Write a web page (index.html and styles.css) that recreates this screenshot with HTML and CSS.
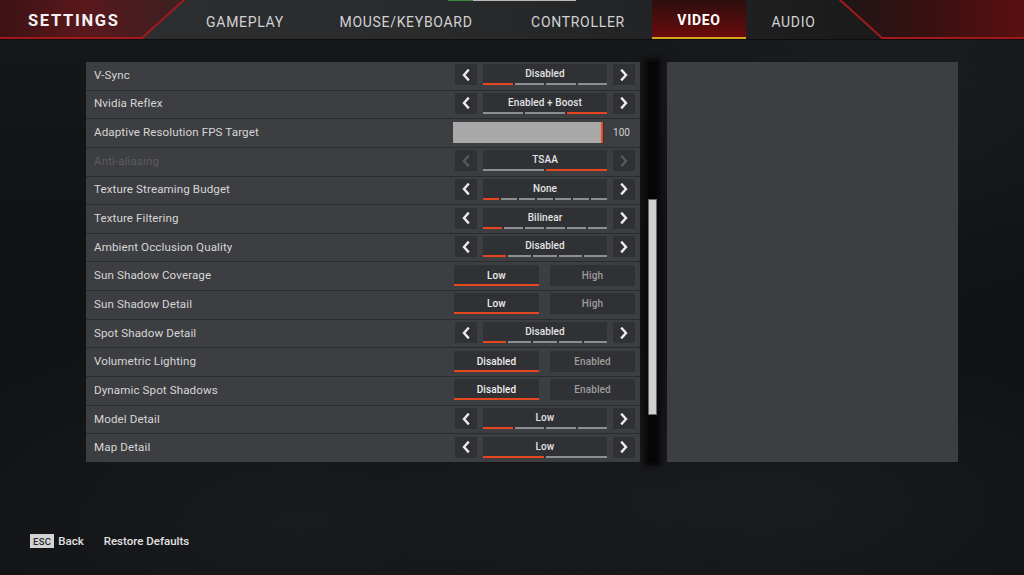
FILE: index.html
```html
<!DOCTYPE html>
<html>
<head>
<meta charset="utf-8">
<link rel="stylesheet" href="styles.css">
</head>
<body>
<div class="screen">
  <header class="topbar">
    <svg class="topbar-deco" width="1024" height="40" viewBox="0 0 1024 40">
      <defs>
        <linearGradient id="gl" x1="0" y1="0" x2="1" y2="0">
          <stop offset="0" stop-color="#3c1214"/>
          <stop offset="0.45" stop-color="#5a181b"/>
          <stop offset="1" stop-color="#3a2123"/>
        </linearGradient>
        <linearGradient id="gr" x1="0" y1="0" x2="1" y2="0">
          <stop offset="0" stop-color="#1d1516"/>
          <stop offset="0.5" stop-color="#3a1011"/>
          <stop offset="1" stop-color="#5a0f10"/>
        </linearGradient>
      </defs>
      <polygon points="0,0 184,0 142,38 0,38" fill="url(#gl)"/>
      <polygon points="840,0 1024,0 1024,38 882,38" fill="url(#gr)"/>
      <polyline points="185,-1 142,38 0,38" fill="none" stroke="#a3191b" stroke-width="2"/>
      <polyline points="839,-1 882,38 1024,38" fill="none" stroke="#a3191b" stroke-width="2"/>
    </svg>
    <div class="topline"><span class="topline-green"></span><span class="topline-gray"></span></div>
    <div class="brand">SETTINGS</div>
    <nav class="tabs">
      <div class="tab tab-gameplay">GAMEPLAY</div>
      <div class="tab tab-mouse">MOUSE/KEYBOARD</div>
      <div class="tab tab-controller">CONTROLLER</div>
      <div class="tab tab-video active">VIDEO</div>
      <div class="tab tab-audio">AUDIO</div>
    </nav>
  </header>

  <main class="content">
    <section class="list">
      <div class="row">
        <div class="label">V-Sync</div>
        <div class="ctl-arrows">
          <div class="arrow"><svg viewBox="0 0 8 12" width="8" height="12"><path d="M6 1.5 L2 6 L6 10.5"/></svg></div>
          <div class="value"><span class="vtext">Disabled</span><div class="segs"><i class="on"></i><i></i><i></i><i></i></div></div>
          <div class="arrow"><svg viewBox="0 0 8 12" width="8" height="12"><path d="M2 1.5 L6 6 L2 10.5"/></svg></div>
        </div>
      </div>
      <div class="row">
        <div class="label">Nvidia Reflex</div>
        <div class="ctl-arrows">
          <div class="arrow"><svg viewBox="0 0 8 12" width="8" height="12"><path d="M6 1.5 L2 6 L6 10.5"/></svg></div>
          <div class="value"><span class="vtext">Enabled + Boost</span><div class="segs"><i></i><i></i><i class="on"></i></div></div>
          <div class="arrow"><svg viewBox="0 0 8 12" width="8" height="12"><path d="M2 1.5 L6 6 L2 10.5"/></svg></div>
        </div>
      </div>
      <div class="row">
        <div class="label">Adaptive Resolution FPS Target</div>
        <div class="ctl-slider">
          <div class="slider"><div class="slider-fill"></div><div class="slider-knob"></div></div>
          <div class="slider-val">100</div>
        </div>
      </div>
      <div class="row disabled">
        <div class="label">Anti-aliasing</div>
        <div class="ctl-arrows">
          <div class="arrow"><svg viewBox="0 0 8 12" width="8" height="12"><path d="M6 1.5 L2 6 L6 10.5"/></svg></div>
          <div class="value"><span class="vtext">TSAA</span><div class="segs"><i></i><i class="on"></i></div></div>
          <div class="arrow"><svg viewBox="0 0 8 12" width="8" height="12"><path d="M2 1.5 L6 6 L2 10.5"/></svg></div>
        </div>
      </div>
      <div class="row">
        <div class="label">Texture Streaming Budget</div>
        <div class="ctl-arrows">
          <div class="arrow"><svg viewBox="0 0 8 12" width="8" height="12"><path d="M6 1.5 L2 6 L6 10.5"/></svg></div>
          <div class="value"><span class="vtext">None</span><div class="segs"><i class="on"></i><i></i><i></i><i></i><i></i><i></i><i></i></div></div>
          <div class="arrow"><svg viewBox="0 0 8 12" width="8" height="12"><path d="M2 1.5 L6 6 L2 10.5"/></svg></div>
        </div>
      </div>
      <div class="row">
        <div class="label">Texture Filtering</div>
        <div class="ctl-arrows">
          <div class="arrow"><svg viewBox="0 0 8 12" width="8" height="12"><path d="M6 1.5 L2 6 L6 10.5"/></svg></div>
          <div class="value"><span class="vtext">Bilinear</span><div class="segs"><i class="on"></i><i></i><i></i><i></i><i></i><i></i></div></div>
          <div class="arrow"><svg viewBox="0 0 8 12" width="8" height="12"><path d="M2 1.5 L6 6 L2 10.5"/></svg></div>
        </div>
      </div>
      <div class="row">
        <div class="label">Ambient Occlusion Quality</div>
        <div class="ctl-arrows">
          <div class="arrow"><svg viewBox="0 0 8 12" width="8" height="12"><path d="M6 1.5 L2 6 L6 10.5"/></svg></div>
          <div class="value"><span class="vtext">Disabled</span><div class="segs"><i class="on"></i><i></i><i></i><i></i><i></i></div></div>
          <div class="arrow"><svg viewBox="0 0 8 12" width="8" height="12"><path d="M2 1.5 L6 6 L2 10.5"/></svg></div>
        </div>
      </div>
      <div class="row">
        <div class="label">Sun Shadow Coverage</div>
        <div class="ctl-toggle">
          <div class="opt active">Low</div>
          <div class="opt">High</div>
        </div>
      </div>
      <div class="row">
        <div class="label">Sun Shadow Detail</div>
        <div class="ctl-toggle">
          <div class="opt active">Low</div>
          <div class="opt">High</div>
        </div>
      </div>
      <div class="row">
        <div class="label">Spot Shadow Detail</div>
        <div class="ctl-arrows">
          <div class="arrow"><svg viewBox="0 0 8 12" width="8" height="12"><path d="M6 1.5 L2 6 L6 10.5"/></svg></div>
          <div class="value"><span class="vtext">Disabled</span><div class="segs"><i class="on"></i><i></i><i></i><i></i><i></i></div></div>
          <div class="arrow"><svg viewBox="0 0 8 12" width="8" height="12"><path d="M2 1.5 L6 6 L2 10.5"/></svg></div>
        </div>
      </div>
      <div class="row">
        <div class="label">Volumetric Lighting</div>
        <div class="ctl-toggle">
          <div class="opt active">Disabled</div>
          <div class="opt">Enabled</div>
        </div>
      </div>
      <div class="row">
        <div class="label">Dynamic Spot Shadows</div>
        <div class="ctl-toggle">
          <div class="opt active">Disabled</div>
          <div class="opt">Enabled</div>
        </div>
      </div>
      <div class="row">
        <div class="label">Model Detail</div>
        <div class="ctl-arrows">
          <div class="arrow"><svg viewBox="0 0 8 12" width="8" height="12"><path d="M6 1.5 L2 6 L6 10.5"/></svg></div>
          <div class="value"><span class="vtext">Low</span><div class="segs"><i class="on"></i><i></i><i></i><i></i></div></div>
          <div class="arrow"><svg viewBox="0 0 8 12" width="8" height="12"><path d="M2 1.5 L6 6 L2 10.5"/></svg></div>
        </div>
      </div>
      <div class="row">
        <div class="label">Map Detail</div>
        <div class="ctl-arrows">
          <div class="arrow"><svg viewBox="0 0 8 12" width="8" height="12"><path d="M6 1.5 L2 6 L6 10.5"/></svg></div>
          <div class="value"><span class="vtext">Low</span><div class="segs"><i class="on"></i><i></i></div></div>
          <div class="arrow"><svg viewBox="0 0 8 12" width="8" height="12"><path d="M2 1.5 L6 6 L2 10.5"/></svg></div>
        </div>
      </div>
    </section>
    <div class="scroll"><div class="thumb"></div></div>
    <aside class="preview"></aside>
  </main>

  <footer class="footer">
    <span class="key">ESC</span><span class="fitem">Back</span>
    <span class="fitem restore">Restore Defaults</span>
  </footer>
</div>
</body>
</html>
```

FILE: styles.css
```css
* { box-sizing: border-box; }
html, body { margin: 0; padding: 0; }
body {
  width: 1024px;
  height: 575px;
  overflow: hidden;
  background: #121315;
  font-family: Roboto, "Liberation Sans", sans-serif;
}
.screen {
  width: 1024px;
  height: 575px;
  display: flex;
  flex-direction: column;
  background:
    radial-gradient(ellipse 380px 160px at 760px 500px, rgba(60,62,66,0.2), transparent),
    radial-gradient(ellipse 420px 200px at 300px 520px, rgba(50,52,56,0.22), transparent),
    radial-gradient(ellipse 300px 200px at 880px 120px, rgba(40,42,46,0.3), transparent),
    linear-gradient(180deg, #17181a 0%, #111214 40%, #121315 100%);
}

/* ---------- header ---------- */
.topbar {
  position: relative;
  height: 40px;
  flex: 0 0 40px;
  display: flex;
  align-items: stretch;
  background: linear-gradient(90deg, #2e2f31 0%, #2a2b2d 40%, #222325 65%, #1b1b1c 82%);
  border-bottom: 1px solid #0e0e0f;
}
.topbar-deco {
  position: absolute;
  left: 0;
  top: 0;
  z-index: 0;
}
.topline {
  position: absolute;
  left: 448px;
  top: 0;
  height: 1px;
  display: flex;
  z-index: 2;
}
.topline-green { width: 25px; background: #3d8a3e; }
.topline-gray { width: 103px; background: #b9b9b9; }
.brand {
  position: relative;
  z-index: 1;
  width: 182px;
  padding-left: 28px;
  padding-top: 2px;
  display: flex;
  align-items: center;
  color: #f2f2f2;
  font-weight: 700;
  font-size: 16.5px;
  letter-spacing: 1.7px;
}
.tabs {
  position: relative;
  z-index: 1;
  display: flex;
}
.tab {
  display: flex;
  align-items: center;
  justify-content: center;
  color: #d2d2d2;
  font-size: 14px;
  letter-spacing: 0.7px;
  height: 39px;
  padding-top: 4px;
}
.tab-gameplay { width: 126px; }
.tab-mouse { width: 196px; }
.tab-controller { width: 148px; }
.tab-video { width: 94px; }
.tab-audio { width: 95px; }
.tab.active {
  color: #ffffff;
  font-weight: 700;
  background: linear-gradient(180deg, #2c0e0e 0%, #4f0d0d 55%, #6c0b0b 100%);
  border-bottom: 2px solid #d8a41f;
  padding-top: 2px;
}

/* ---------- content ---------- */
.content {
  display: flex;
  margin-top: 22px;
  padding-left: 86px;
  height: 400px;
}
.list {
  width: 554px;
  display: grid;
  grid-template-rows: repeat(14, 1fr);
  row-gap: 1px;
  background: #2a2b2e;
}
.row {
  display: flex;
  align-items: center;
  background: #3d3e41;
  padding-bottom: 2px;
  padding-right: 5px;
}
.label {
  padding-left: 8px;
  color: #d6d6d6;
  font-size: 11.6px;
  letter-spacing: 0.1px;
  flex: 1;
}
.row.disabled .label { color: #5b5c5f; }

/* arrow selector */
.ctl-arrows {
  display: flex;
  gap: 6px;
  height: 21px;
}
.arrow {
  width: 22px;
  background: #303134;
  display: flex;
  align-items: center;
  justify-content: center;
}
.arrow svg path {
  fill: none;
  stroke: #ececec;
  stroke-width: 2.4;
  stroke-linecap: square;
}
.row.disabled .arrow svg path { stroke: #57585b; }
.value {
  width: 124px;
  background: #303134;
  display: flex;
  flex-direction: column;
  justify-content: space-between;
  align-items: stretch;
}
.vtext {
  color: #e4e4e4;
  font-size: 10px;
  font-weight: 500;
  text-align: center;
  padding-top: 4px;
  letter-spacing: 0.1px;
}
.segs {
  display: flex;
  gap: 2px;
  height: 2px;
}
.segs i {
  flex: 1;
  background: #8d8e90;
}
.segs i.on { background: #e5461d; }

/* slider */
.ctl-slider {
  display: flex;
  align-items: stretch;
  height: 21px;
  margin-right: -1px;
}
.slider {
  width: 150px;
  display: flex;
  background: #303134;
}
.slider-fill {
  flex: 1;
  background: #a9a9a9;
}
.slider-knob {
  width: 2px;
  background: #ef4a1c;
}
.slider-val {
  width: 33px;
  display: flex;
  align-items: center;
  justify-content: center;
  color: #cfcfcf;
  font-size: 10px;
  padding-left: 3px;
  border-left: 1px solid #333437;
}

/* toggle */
.ctl-toggle {
  display: flex;
  gap: 11px;
  height: 21px;
}
.opt {
  width: 85px;
  background: #303134;
  display: flex;
  align-items: center;
  justify-content: center;
  color: #9d9d9d;
  font-size: 10px;
  font-weight: 500;
  letter-spacing: 0.1px;
}
.opt.active {
  color: #ededed;
  box-shadow: inset 0 -2px 0 #e5461d;
}

/* scrollbar */
.scroll {
  width: 9px;
  margin-left: 8px;
  background: #050505;
  box-shadow: 0 0 0 3px #0b0b0c, 0 0 5px 4px rgba(5,5,5,0.6);
  position: relative;
  display: flex;
  flex-direction: column;
  padding-top: 137px;
}
.thumb {
  height: 216px;
  background: #cfcfcf;
  border: 1px solid #6a6a6a;
}
.preview {
  width: 291px;
  margin-left: 10px;
  background: #3d3e41;
}

/* footer */
.footer {
  margin-top: 72px;
  padding-left: 30px;
  display: flex;
  align-items: center;
  height: 14px;
  font-size: 11.5px;
  font-weight: 500;
  color: #e2e2e2;
}
.key {
  background: #d4d4d4;
  color: #2a2a2a;
  font-size: 9.5px;
  font-weight: 500;
  height: 14px;
  padding: 0 3px;
  display: flex;
  align-items: center;
  letter-spacing: 0.3px;
}
.fitem { margin-left: 4px; }
.restore { margin-left: 20px; }
```
